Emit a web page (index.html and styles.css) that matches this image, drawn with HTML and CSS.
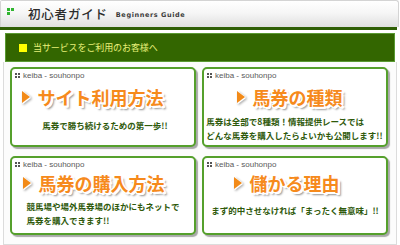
FILE: index.html
```html
<!DOCTYPE html>
<html lang="ja">
<head>
<meta charset="utf-8">
<link rel="stylesheet" href="styles.css">
</head>
<body>
<div class="page">
  <header class="header">
    <span class="logo"><i></i><i></i><i></i><i class="off"></i></span>
    <h1 class="title">初心者ガイド</h1>
    <span class="sub">Beginners Guide</span>
  </header>
  <div class="rule"></div>
  <div class="banner"><span class="sq"></span>当サービスをご利用のお客様へ</div>
  <div class="panel">
    <div class="grid">
      <section class="card">
        <div class="label"><span class="dots"><i></i><i></i><i></i><i></i></span>keiba - souhonpo</div>
        <div class="head r1"><span class="tri"></span><span class="htxt">サイト利用方法</span></div>
        <div class="body b1"><p>馬券で勝ち続けるための第一歩!!</p></div>
      </section>
      <section class="card">
        <div class="label"><span class="dots"><i></i><i></i><i></i><i></i></span>keiba - souhonpo</div>
        <div class="head"><span class="tri"></span><span class="htxt">馬券の種類</span></div>
        <div class="body b2"><p>馬券は全部で8種類！情報提供レースでは<br>どんな馬券を購入したらよいかも公開します!!</p></div>
      </section>
      <section class="card">
        <div class="label"><span class="dots"><i></i><i></i><i></i><i></i></span>keiba - souhonpo</div>
        <div class="head r3"><span class="tri"></span><span class="htxt">馬券の購入方法</span></div>
        <div class="body b3"><p>競馬場や場外馬券場のほかにもネットで<br>馬券を購入できます!!</p></div>
      </section>
      <section class="card">
        <div class="label"><span class="dots"><i></i><i></i><i></i><i></i></span>keiba - souhonpo</div>
        <div class="head r4"><span class="tri"></span><span class="htxt">儲かる理由</span></div>
        <div class="body b4"><p>まず的中させなければ「まったく無意味」!!</p></div>
      </section>
    </div>
  </div>
</div>
</body>
</html>
```

FILE: styles.css
```css
* { box-sizing: border-box; }
html, body { margin: 0; padding: 0; background: #ffffff; }
body { width: 400px; height: 245px; overflow: hidden; font-family: "Noto Sans CJK JP", "Noto Sans", sans-serif; }

.page { width: 399px; }

.header {
  height: 27px;
  display: flex;
  align-items: center;
  padding-left: 6px;
  border: 1px solid #d4d4d4;
  border-bottom: none;
  border-radius: 2px 3px 0 0;
  background: linear-gradient(#ffffff 0%, #f6f6f6 45%, #e0e0e0 100%);
}
.logo {
  display: grid;
  grid-template-columns: 3px 3px;
  grid-template-rows: 3px 3px;
  gap: 1px;
  margin-top: -6px;
}
.logo i { display: block; background: #2fb52f; }
.logo i.off { background: transparent; }
.title {
  margin: 0 0 0 14px;
  font-size: 12.5px;
  font-weight: 500;
  color: #2b2b2b;
  letter-spacing: 0.8px;
  line-height: 1;
}
.sub {
  margin-left: 8px;
  margin-top: 2px;
  font-family: "DejaVu Sans", sans-serif;
  font-size: 6.5px;
  font-weight: bold;
  letter-spacing: 0.6px;
  color: #3a3a3a;
}

.rule { height: 3px; background: #2f5f05; margin-right: 2px; }

.banner {
  margin: 3px 4px 0 5px;
  height: 29px;
  background: #336600;
  border: 1px solid #5a9a32;
  display: flex;
  align-items: center;
  padding-left: 13px;
  font-size: 9px;
  color: #e8f07a;
  letter-spacing: -0.1px;
}
.sq { width: 8px; height: 8px; background: #ffff00; margin-right: 6px; }

.panel {
  margin: 0 2px 0 3px;
  height: 183px;
  border: 1px solid #dcdcdc;
  border-top: none;
  background: #fcfcfc;
  padding: 5px 6px 0 6px;
}
.grid {
  display: grid;
  grid-template-columns: 186px 186px;
  grid-template-rows: 80px 79px;
  column-gap: 6px;
  row-gap: 9px;
}
.card {
  background: #ffffff;
  border: 2px solid #55a02c;
  border-radius: 5px;
  box-shadow: 2px 2px 1px #a8a8a8;
  display: flex;
  flex-direction: column;
  padding: 1px 0 0 3px;
}
.label {
  display: flex;
  align-items: center;
  font-family: "Liberation Sans", sans-serif;
  font-size: 8px;
  color: #5a5a5a;
  height: 10px;
}
.dots {
  display: grid;
  grid-template-columns: 2px 2px;
  grid-template-rows: 2px 2px;
  gap: 1px 1px;
  margin-right: 3px;
}
.dots i { display: block; background: #555; }

.head {
  display: flex;
  align-items: center;
  justify-content: center;
  height: 26px;
  margin-top: 4px;
  padding-right: 14px;
}
.head.r1 { padding-right: 24px; }
.head.r3 { padding-right: 22px; margin-top: 1px; }
.head.r4 { padding-right: 20px; margin-top: 1px; }
.tri {
  width: 0; height: 0;
  border-top: 6px solid transparent;
  border-bottom: 6px solid transparent;
  border-left: 8px solid #f28a18;
  margin-right: 8px;
  filter: drop-shadow(1px 0 0 #fff) drop-shadow(0 1px 0 #fff) drop-shadow(1px 1px 1px #aaa);
}
.htxt {
  font-size: 18px;
  font-weight: bold;
  color: #f68a1c;
  line-height: 1;
  letter-spacing: 0;
  text-shadow:
    1px 0 0 #fff, -1px 0 0 #fff, 0 1px 0 #fff, 0 -1px 0 #fff,
    1px 1px 0 #fff, -1px -1px 0 #fff, 1px -1px 0 #fff, -1px 1px 0 #fff,
    2px 2px 0 #fff, 2px 1px 0 #fff, 1px 2px 0 #fff,
    3px 3px 2px #8e8e8e;
}

.body {
  display: flex;
  justify-content: center;
  padding-right: 3px;
}
.body p {
  margin: 0;
  font-size: 8.5px;
  font-weight: bold;
  line-height: 14px;
  color: #2f5a0c;
  text-align: left;
  white-space: nowrap;
}
.b1 { margin-top: 8px; padding-left: 4px; }
.b2 { margin-top: 4px; padding-right: 4px; }
.b3 { margin-top: 3px; }
.b4 { margin-top: 7px; }
```
